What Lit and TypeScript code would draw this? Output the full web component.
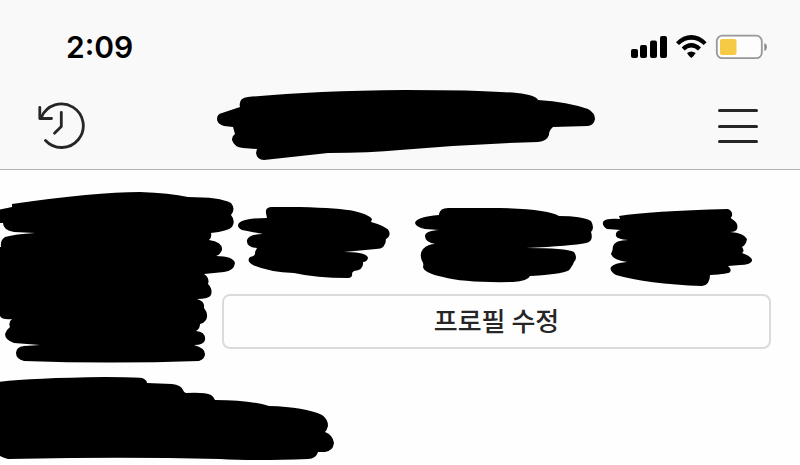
import { LitElement, html, css, svg } from "lit";
import { customElement } from "lit/decorators.js";

const stats = [
  {
    box: "222 190 183 104",
    d: "M266 213Q265 207 272 207L300 207Q340 208 354 211Q368 214 372 219L371 222Q386 226 389 231Q391 236 386 239Q386 249 376 249L344 252Q367 252 368 258Q367 262 363 262Q364 270 354 271Q353 272 352 273Q353 278 348 278Q316 278 294 273Q269 272 253 265Q246 261 250 257Q256 256 255 252L257 248Q246 247 247 240Q249 234 263 234L242 230Q236 227 239 223Q244 218 267 218Z",
  },
  {
    box: "405 190 183 104",
    d: "M439 214Q440 208 448 208L500 208Q548 209 559 216Q582 216 591 221Q595 228 591 232Q594 241 586 243Q572 246 526 248Q566 248 574 252Q578 258 574 262Q573 265 570 269Q568 274 530 276Q528 281 513 282Q465 283 443 277Q424 273 423 267Q424 263 422 261Q419 254 423 249Q428 244 435 244Q425 242 425 236Q425 231 439 230L425 229Q416 227 415 223Q416 217 439 215Z",
  },
  {
    box: "588 190 183 104",
    d: "M619 216Q650 211 728 209Q733 211 732 216Q730 218 732 219Q739 223 737 229Q736 232 730 232Q744 233 747 239Q746 245 742 247Q745 251 742 253Q753 257 752 261Q750 265 740 265L728 266Q732 269 730 272Q729 274 710 275Q710 285 702 286Q647 284 616 275Q609 271 611 267Q614 263 627 262Q613 260 611 254Q613 250 613 246Q615 240 628 240Q617 239 616 236Q615 231 621 230L607 229Q602 226 603 222Q605 218 620 219Z",
  },
];

const titleMark =
  "M240 107Q238 98 248 97Q310 91 405 90Q480 90 517 93Q536 95 538 100Q568 102 588 109Q595 113 595 119Q594 125 588 126L553 127Q549 130 549 135Q547 141 538 142Q470 144 400 150Q370 153 328 153L264 160Q257 160 256 153L257 149L243 148Q234 147 232 140Q232 136 235 134L233 127L224 126Q217 124 217 119Q217 114 222 113Z";

const avatarMark =
  "M12 207L12 204Q95 192 140 192Q170 193 188 197Q220 197 231 203Q236 209 231 215Q236 221 232 227Q228 231 211 233Q212 238 209 240Q223 242 222 250Q220 255 216 256Q233 256 235 263Q234 271 224 272L204 274Q210 278 208 284Q213 289 211 295Q209 299 197 299Q205 301 204 308Q209 314 206 320Q204 323 200 324Q200 329 196 331Q206 332 205 340Q204 345 194 345Q205 348 205 354Q205 359 199 361Q110 364 24 361Q16 359 16 353Q16 347 24 346L40 345L14 343Q5 340 5 334Q7 329 10 327Q8 322 12 319Q2 320 0 316L-2 316L-2 247L1 247Q0 240 5 237Q15 234 35 233L14 232Q3 230 3 223L-2 223L-2 210Z";

const bioMark =
  "M-2 382Q30 378 105 377Q135 377 142 378Q147 380 147 383L172 384Q181 385 183 390Q184 393 186 393Q205 392 211 395Q214 397 215 400Q250 400 269 406Q305 407 322 415Q328 419 328 426Q327 430 325 432Q333 435 334 443Q333 451 325 452L318 452Q316 459 308 459Q255 461 220 459Q140 457 70 458L8 459Q3 458 -2 455Z";

@customElement("app-root")
export class AppRoot extends LitElement {
  static styles = css`
    :host {
      display: block;
      min-height: 100vh;
      background: #fefefe;
      color: #262626;
      font-family: Inter, "Noto Sans CJK KR", sans-serif;
    }
    svg {
      display: block;
    }
    .top {
      background: #f9f9f9;
      border-bottom: 1px solid #b4b4b4;
    }
    .status {
      display: flex;
      align-items: center;
      justify-content: space-between;
      height: 82px;
      padding: 6px 32px 0 66px;
      color: #000;
    }
    .time {
      font-size: 30px;
      line-height: 40px;
      font-weight: 600;
    }
    .signals {
      display: flex;
      align-items: center;
      gap: 8px;
    }
    .nav {
      display: grid;
      grid-template-columns: 1fr auto 1fr;
      align-items: center;
      padding: 0 40px 5px 36px;
    }
    .title {
      margin: 0;
    }
    button {
      padding: 0;
      margin: 0;
      border: 0;
      background: none;
      color: inherit;
      font-family: inherit;
      cursor: pointer;
    }
    .menu {
      justify-self: end;
    }
    .history {
      justify-self: start;
    }
    .profile {
      display: grid;
      grid-template-columns: 222px 1fr;
      padding: 20px 29px 6px 0;
    }
    .mark {
      overflow: visible;
    }
    .stats {
      display: grid;
      grid-template-columns: repeat(3, 1fr);
      margin: 0;
      padding: 0;
      list-style: none;
    }
    .stats .mark {
      width: 100%;
      height: 104px;
    }
    .edit {
      box-sizing: border-box;
      width: 100%;
      height: 55px;
      padding-bottom: 3px;
      border: 2px solid #dbdbdb;
      border-radius: 8px;
      background: #fefefe;
      font-family: "Noto Sans CJK KR", sans-serif;
      font-size: 26px;
      line-height: 40px;
      font-weight: 500;
    }
  `;

  render() {
    return html`
      <header class="top">
        <div class="status">
          <span class="time">2:09</span>
          <div class="signals">
            <svg width="38" height="24" viewBox="629 35 38 24" aria-hidden="true">
              <rect x="631" y="49" width="7" height="9" rx="2" />
              <rect x="640" y="45" width="7" height="13" rx="2" />
              <rect x="650" y="40.500" width="7" height="17.500" rx="2" />
              <rect x="660" y="36" width="7" height="22" rx="2" />
            </svg>
            <svg width="32" height="24" viewBox="675 35 32 24" aria-hidden="true">
              <path d="M676 42.200Q683 35 691.300 35T706.600 42.200L703.700 45Q698 39.700 691.300 39.700T679 45Z" />
              <path d="M681.700 47.500Q686 43 691.300 43T701 47.500L698 50.400Q695 47.600 691.300 47.600T684.700 50.400Z" />
              <path d="M687 53Q691.300 49.800 695.700 53Q694 56 691.300 58Q688.600 56 687 53Z" />
            </svg>
            <svg width="53" height="26" viewBox="715 34 53 26" aria-hidden="true">
              <rect x="716.800" y="35.700" width="45" height="22.500" rx="5.500" fill="#fdfdfd" stroke="#98989a" stroke-width="1.800" />
              <rect x="720" y="39" width="16.500" height="16" rx="2" fill="#f7ca45" />
              <path d="M764.300 43Q767 44 767 47T764.300 51Z" fill="#8c8c8e" />
            </svg>
          </div>
        </div>
        <nav class="nav">
          <button class="history" aria-label="History">
            <svg width="50" height="50" viewBox="36 101 50 50" fill="none" stroke="#262626" stroke-width="2.800" stroke-linecap="round" stroke-linejoin="round">
              <path d="M45.500 140.500A21.800 21.800 0 1 0 41.500 117" />
              <path d="M39.800 107.500V118.500H51.500M61.300 112.300V126.500L54.500 133.300" />
            </svg>
          </button>
          <h1 class="title" aria-label="Account">
            <svg class="mark" width="400" height="76" viewBox="198 88 400 76">${svg`<path d=${titleMark} />`}</svg>
          </h1>
          <button class="menu" aria-label="Menu">
            <svg width="44" height="50" viewBox="716 101 44 50" stroke="#262626" stroke-width="3" stroke-linecap="round">
              <path d="M719.500 110.500H756.500M719.500 126.500H756.500M719.500 141.500H756.500" />
            </svg>
          </button>
        </nav>
      </header>
      <main>
        <section class="profile">
          <svg class="mark" width="222" height="174" viewBox="0 190 222 174">${svg`<path d=${avatarMark} />`}</svg>
          <div>
            <ul class="stats">
              ${stats.map(
                (s) => html`<li><svg class="mark" viewBox=${s.box}>${svg`<path d=${s.d} />`}</svg></li>`
              )}
            </ul>
            <button class="edit">프로필 수정</button>
          </div>
        </section>
        <svg class="mark" width="340" height="94" viewBox="0 370 340 94">${svg`<path d=${bioMark} />`}</svg>
      </main>
    `;
  }
}
